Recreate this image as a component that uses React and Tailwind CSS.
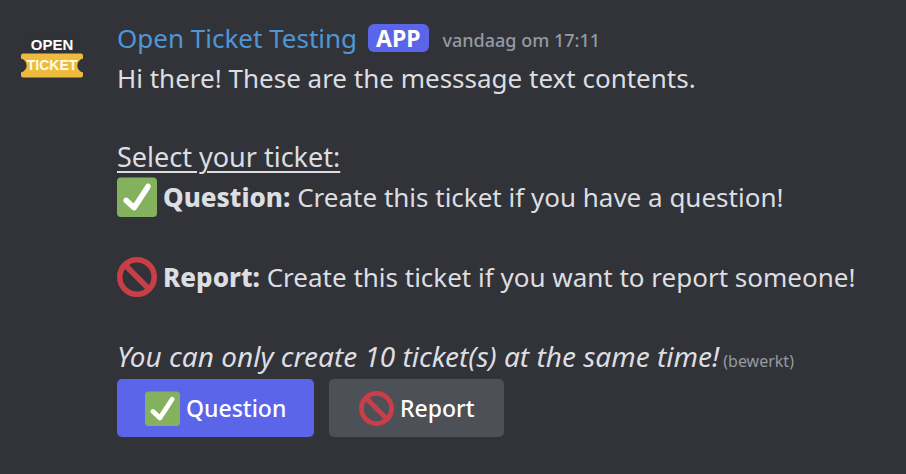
import React from "react";

function CheckEmoji({ className }) {
  return (
    <svg viewBox="0 0 36 36" className={className} role="img" aria-label="check">
      <rect y="0.500" width="36" height="35.500" rx="3.6" fill="#83b15e" />
      <path
        d="M29.28 6.362c-1.156-.751-2.704-.422-3.458.736L14.936 23.877l-5.029-4.65c-1.014-.938-2.596-.875-3.533.138-.937 1.014-.875 2.596.139 3.533l7.209 6.666c.48.445 1.09.665 1.696.665.673 0 1.534-.282 2.099-1.139.332-.506 12.5-19.27 12.5-19.27.751-1.159.421-2.707-.737-3.458z"
        fill="#fff"
      />
    </svg>
  );
}

function ForbiddenEmoji({ className }) {
  return (
    <svg viewBox="0 0 36 36" className={className} role="img" aria-label="forbidden">
      <circle cx="18" cy="18" r="15.5" fill="none" stroke="#ca3e48" strokeWidth="5" />
      <path d="M7 7l22 22" stroke="#ca3e48" strokeWidth="5" />
    </svg>
  );
}

function Avatar() {
  return (
    <svg viewBox="0 0 64 44" className="mt-9 h-11 w-16 shrink-0" role="img" aria-label="Open Ticket">
      <rect x="4" y="1" width="56" height="20" rx="2" fill="#2e3338" />
      <path
        d="M3 17.500H61Q63 17.500 63 19.500V22.500C55.500 24.500 55.500 34.500 63 36.500V39.500Q63 41.500 61 41.500H3Q1 41.500 1 39.500V36.500C8.500 34.500 8.500 24.500 1 22.500V19.500Q1 17.500 3 17.500Z"
        fill="#efbb3f"
      />
      <text x="32" y="14" textAnchor="middle" className="fill-white font-['Liberation_Sans',sans-serif] text-[15px] font-bold">
        OPEN
      </text>
      <text x="32" y="34" textAnchor="middle" className="fill-[#fffbe8] font-['Liberation_Sans',sans-serif] text-[14px] font-bold">
        TICKET
      </text>
    </svg>
  );
}

export default function App() {
  return (
    <main className="flex min-h-screen gap-[33px] bg-[#323338] pl-5 font-['Noto_Sans',sans-serif] text-[26px] leading-[40px] text-[#dcdee1]">
      <Avatar />
      <article className="min-w-0 flex-1 pt-[18px] whitespace-nowrap">
        <header className="flex h-10 items-center">
          <h1 className="font-normal text-[#4f96d6]">Open Ticket Testing</h1>
          <span className="ml-[11px] flex h-7 items-center rounded-md bg-[#5a65ea] px-2 text-[23px] font-bold text-white">
            APP
          </span>
          <time className="ml-[14px] pt-1 text-[18px] font-medium text-[#949ba3]">vandaag om 17:11</time>
        </header>
        <p>Hi there! These are the messsage text contents.</p>
        <p className="mt-[39px] text-[27px] underline decoration-2 underline-offset-4">Select your ticket:</p>
        <p className="flex items-center gap-[6px]">
          <CheckEmoji className="size-10" />
          <span>
            <strong className="font-extrabold">Question:</strong> Create this ticket if you have a question!
          </span>
        </p>
        <p className="mt-10 flex items-center gap-[6px]">
          <ForbiddenEmoji className="size-10" />
          <span>
            <strong className="font-extrabold">Report:</strong> Create this ticket if you want to report someone!
          </span>
        </p>
        <p className="mt-[39px] flex h-10 items-baseline gap-1">
          <em className="text-[28px]">You can only create 10 ticket(s) at the same time!</em>
          <small className="text-base leading-[40px] text-[#949ba3]">(bewerkt)</small>
        </p>
        <div className="mt-[3px] flex gap-[15px]">
          <button className="flex h-[58px] min-w-[175px] items-center justify-center gap-[6px] rounded-[5px] bg-[#5a65ea] px-7 text-[23px] font-medium text-white">
            <CheckEmoji className="size-[35px]" />
            Question
          </button>
          <button className="flex h-[58px] min-w-[175px] items-center justify-center gap-[6px] rounded-[5px] bg-[#4e5058] px-7 text-[23px] font-medium text-white">
            <ForbiddenEmoji className="size-[35px]" />
            Report
          </button>
        </div>
      </article>
    </main>
  );
}
